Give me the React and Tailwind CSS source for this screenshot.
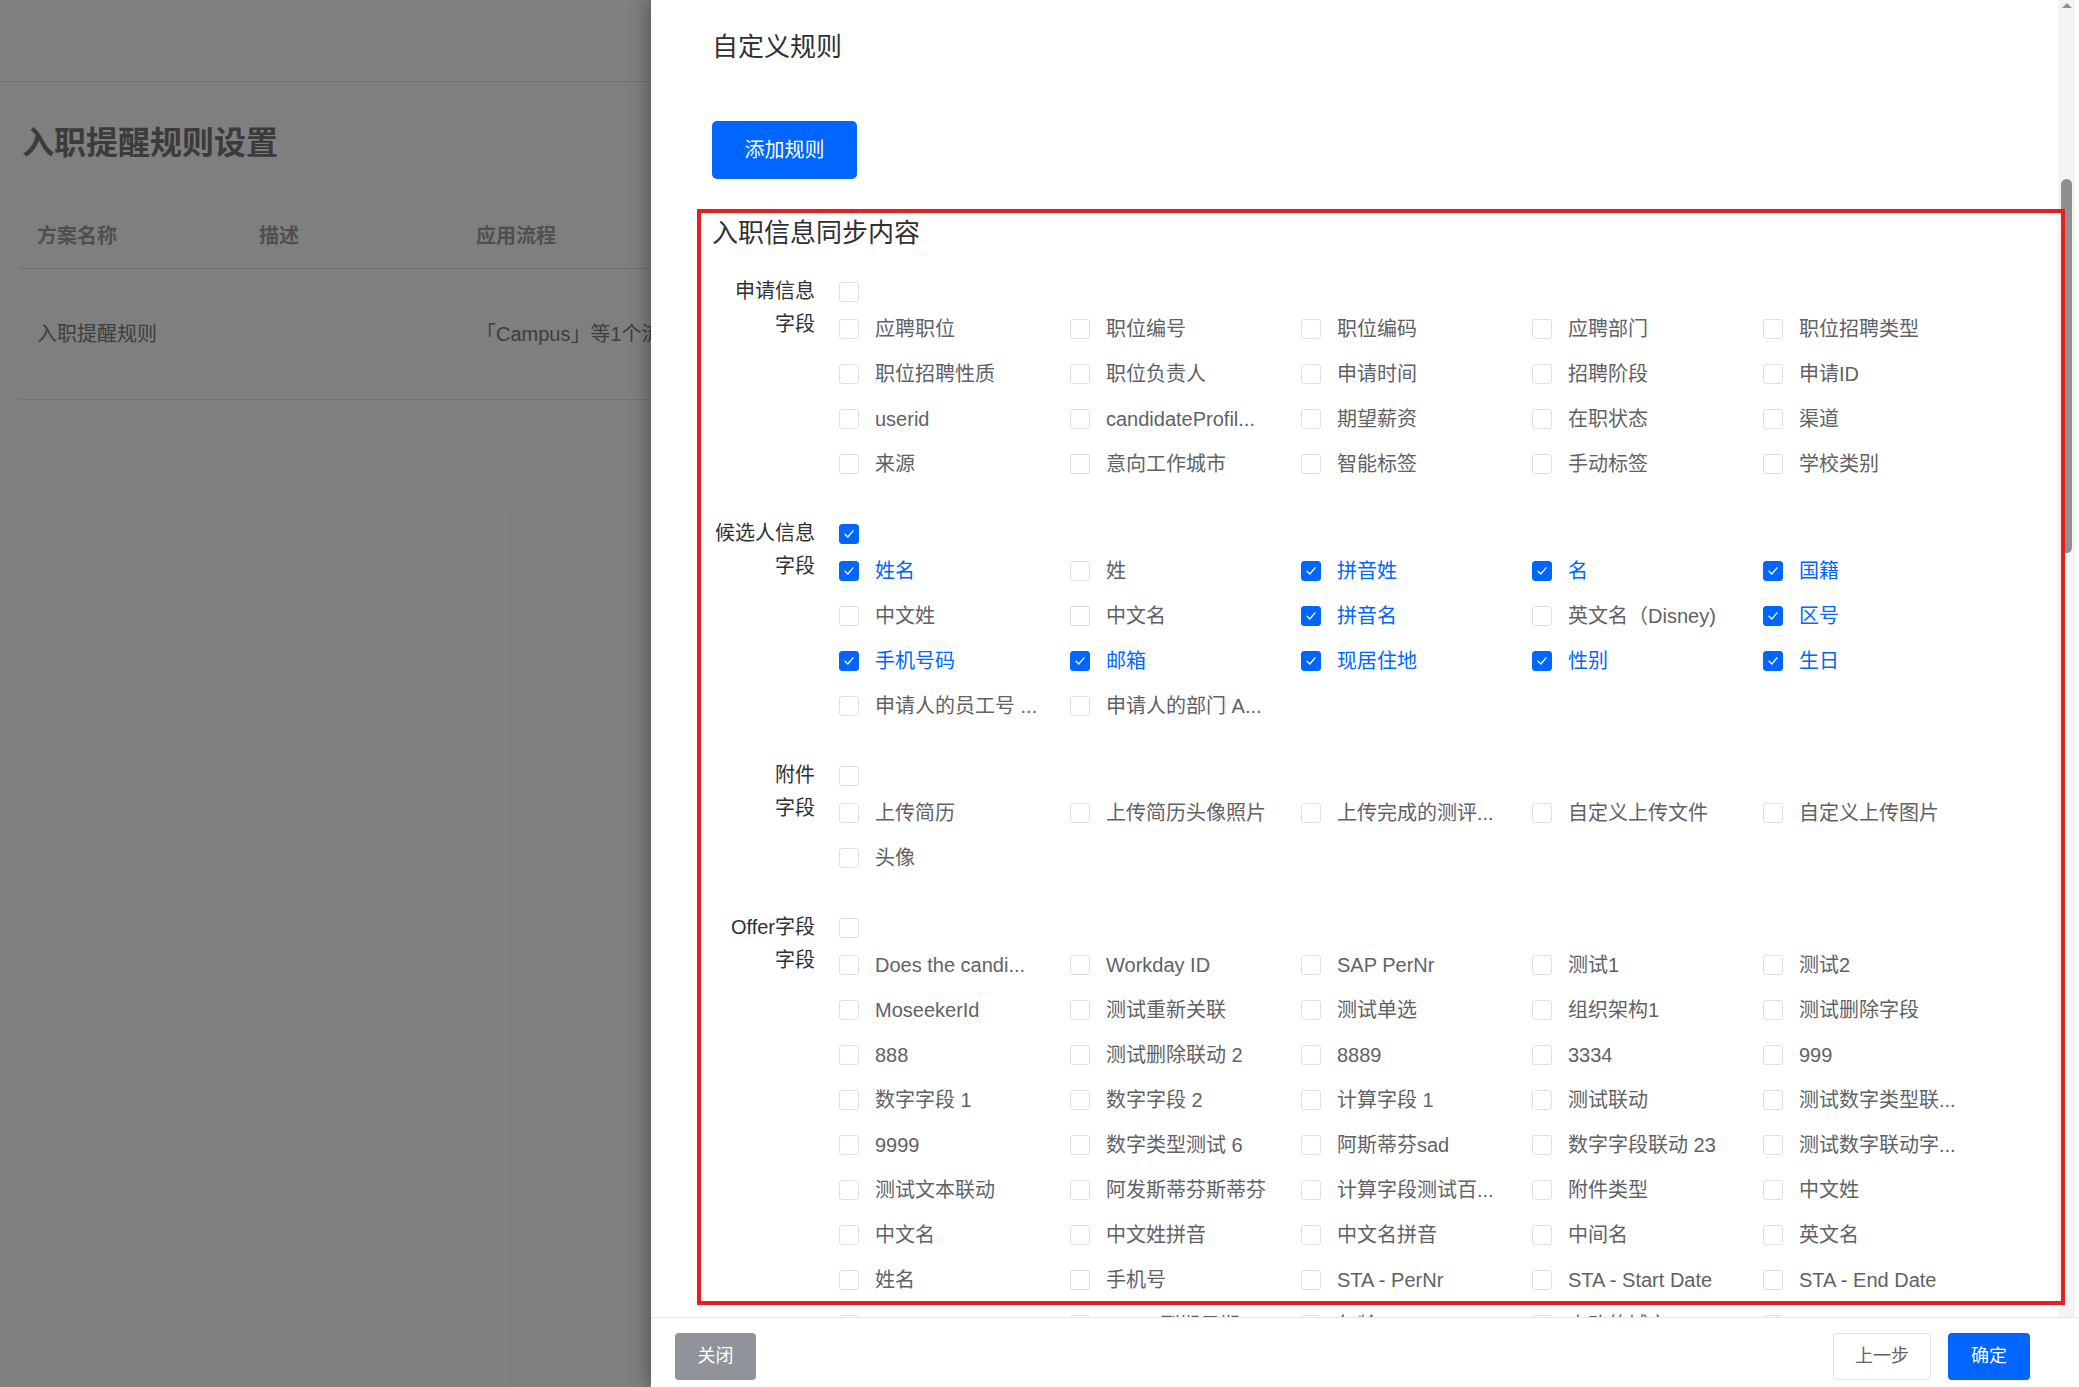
import React from "react";

const sections = [
  {
    l1: "申请信息",
    l2: "字段",
    all: false,
    items: [
      ["应聘职位"], ["职位编号"], ["职位编码"], ["应聘部门"], ["职位招聘类型"],
      ["职位招聘性质"], ["职位负责人"], ["申请时间"], ["招聘阶段"], ["申请ID"],
      ["userid"], ["candidateProfil..."], ["期望薪资"], ["在职状态"], ["渠道"],
      ["来源"], ["意向工作城市"], ["智能标签"], ["手动标签"], ["学校类别"],
    ],
  },
  {
    l1: "候选人信息",
    l2: "字段",
    all: true,
    items: [
      ["姓名", 1], ["姓"], ["拼音姓", 1], ["名", 1], ["国籍", 1],
      ["中文姓"], ["中文名"], ["拼音名", 1], ["英文名（Disney)"], ["区号", 1],
      ["手机号码", 1], ["邮箱", 1], ["现居住地", 1], ["性别", 1], ["生日", 1],
      ["申请人的员工号 ..."], ["申请人的部门 A..."],
    ],
  },
  {
    l1: "附件",
    l2: "字段",
    all: false,
    items: [
      ["上传简历"], ["上传简历头像照片"], ["上传完成的测评..."], ["自定义上传文件"], ["自定义上传图片"],
      ["头像"],
    ],
  },
  {
    l1: "Offer字段",
    l2: "字段",
    all: false,
    items: [
      ["Does the candi..."], ["Workday ID"], ["SAP PerNr"], ["测试1"], ["测试2"],
      ["MoseekerId"], ["测试重新关联"], ["测试单选"], ["组织架构1"], ["测试删除字段"],
      ["888"], ["测试删除联动 2"], ["8889"], ["3334"], ["999"],
      ["数字字段 1"], ["数字字段 2"], ["计算字段 1"], ["测试联动"], ["测试数字类型联..."],
      ["9999"], ["数字类型测试 6"], ["阿斯蒂芬sad"], ["数字字段联动 23"], ["测试数字联动字..."],
      ["测试文本联动"], ["阿发斯蒂芬斯蒂芬"], ["计算字段测试百..."], ["附件类型"], ["中文姓"],
      ["中文名"], ["中文姓拼音"], ["中文名拼音"], ["中间名"], ["英文名"],
      ["姓名"], ["手机号"], ["STA - PerNr"], ["STA - Start Date"], ["STA - End Date"],
      ["STA - Percent"], ["STA - 到期日期"], ["年龄"], ["未改的城市"], ["Citizen Stat..."],
    ],
  },
];

function Box({ checked }) {
  return checked ? (
    <span className="flex h-[20px] w-[20px] shrink-0 items-center justify-center rounded-[3px] border border-[#0066ff] bg-[#0066ff]">
      <svg width="14" height="14" viewBox="0 0 14 14" fill="none">
        <path d="M3 7.2 L5.8 10 L11 3.8" stroke="white" strokeWidth="1.3" strokeLinecap="round" strokeLinejoin="round" />
      </svg>
    </span>
  ) : (
    <span className="block h-[20px] w-[20px] shrink-0 rounded-[3px] border border-[#dcdfe6] bg-white" />
  );
}

function Section({ s, first }) {
  return (
    <div className={`flex ${first ? "" : "mt-[34px]"}`}>
      <div className="mr-[24px] -mt-[3px] w-[103px] shrink-0 text-right text-[20px] leading-[33px] text-[#303133]">
        <div>{s.l1}</div>
        <div>{s.l2}</div>
      </div>
      <div>
        <div className="flex h-[28px] items-center">
          <Box checked={s.all} />
        </div>
        <div className="grid grid-cols-[repeat(5,231px)]">
          {s.items.map(([t, c], i) => (
            <div key={i} className="flex h-[45px] items-center">
              <Box checked={!!c} />
              <span
                className={`ml-[16px] whitespace-nowrap text-[20px] leading-[28px] ${
                  c ? "text-[#0066ff]" : "text-[#606266]"
                }`}
              >
                {t}
              </span>
            </div>
          ))}
        </div>
      </div>
    </div>
  );
}

export default function App() {
  return (
    <div className="relative h-[1387px] w-[2079px] overflow-hidden bg-white font-['Liberation_Sans','Noto_Sans_CJK_SC',sans-serif]">
      {/* background page */}
      <div className="h-full">
        <div className="h-[82px] border-b border-[#e2e2e2]" />
        <h1 className="ml-[22px] mt-[41px] text-[32px] font-bold leading-[40px] text-[#777777]">入职提醒规则设置</h1>
        <div className="ml-[20px] mt-[40px] w-[900px]">
          <div className="flex h-[66px] items-center border-b border-[#e2e2e2] pl-[17px] text-[20px] font-bold text-[#9e9e9e]">
            <span className="w-[222px]">方案名称</span>
            <span className="w-[217px]">描述</span>
            <span>应用流程</span>
          </div>
          <div className="flex h-[131px] items-center border-b border-[#e2e2e2] pl-[17px] text-[20px] text-[#7c7c7c]">
            <span className="w-[222px]">入职提醒规则</span>
            <span className="w-[217px]" />
            <span>「Campus」等1个流程</span>
          </div>
        </div>
      </div>

      {/* mask */}
      <div className="absolute inset-0 bg-black/50" />

      {/* drawer */}
      <div className="absolute right-0 top-0 flex h-full w-[1428px] flex-col bg-white shadow-[-6px_0_14px_rgba(0,0,0,0.25)]">
        <div className="relative flex-1 overflow-hidden pl-[61px] pt-[29px]">
          <div className="text-[26px] leading-[36px] text-[#303133]">自定义规则</div>
          <button className="mt-[56px] flex h-[58px] w-[145px] items-center justify-center rounded-[5px] bg-[#0066ff] text-[20px] text-white">
            添加规则
          </button>
          <div className="mt-[36px] text-[26px] leading-[36px] text-[#303133]">入职信息同步内容</div>
          <div className="mt-[27px]">
            {sections.map((s, i) => (
              <Section key={i} s={s} first={i === 0} />
            ))}
          </div>

          {/* scrollbar */}
          <div className="absolute bottom-0 right-[4px] top-0 w-[17px] bg-[#f4f4f4]">
            <div className="mx-auto mt-[3px] h-0 w-0 border-x-[5px] border-b-[5px] border-x-transparent border-b-[#8f8f8f]" />
            <div className="absolute left-[3px] top-[179px] h-[374px] w-[11px] rounded-full bg-[#8f8f8f]" />
          </div>
        </div>
        <div className="flex h-[70px] shrink-0 items-start justify-between border-t border-[#e4e7ed] pl-[24px] pr-[49px] pt-[15px]">
          <button className="flex h-[47px] w-[81px] items-center justify-center rounded-[4px] bg-[#909399] text-[18px] text-white">
            关闭
          </button>
          <div className="flex gap-[17px]">
            <button className="flex h-[47px] w-[98px] items-center justify-center rounded-[4px] border border-[#dcdfe6] bg-white text-[18px] text-[#606266]">
              上一步
            </button>
            <button className="flex h-[47px] w-[82px] items-center justify-center rounded-[4px] bg-[#0066ff] text-[18px] text-white">
              确定
            </button>
          </div>
        </div>
      </div>

      {/* annotation box */}
      <div className="pointer-events-none absolute left-[697px] top-[209px] h-[1096px] w-[1368px] border-[4px] border-[#e42020]" />
    </div>
  );
}
